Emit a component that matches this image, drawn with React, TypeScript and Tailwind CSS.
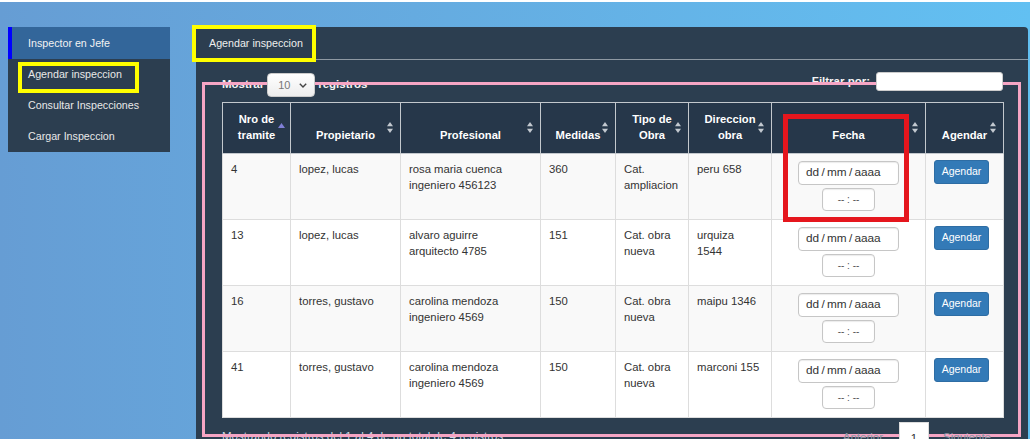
import React from "react";

type Row = {
  n: string;
  prop: string;
  prof: string[];
  med: string;
  tipo: string[];
  dir: string[];
};

const rows: Row[] = [
  { n: "4", prop: "lopez, lucas", prof: ["rosa maria cuenca", "ingeniero 456123"], med: "360", tipo: ["Cat.", "ampliacion"], dir: ["peru 658"] },
  { n: "13", prop: "lopez, lucas", prof: ["alvaro aguirre", "arquitecto 4785"], med: "151", tipo: ["Cat. obra", "nueva"], dir: ["urquiza", "1544"] },
  { n: "16", prop: "torres, gustavo", prof: ["carolina mendoza", "ingeniero 4569"], med: "150", tipo: ["Cat. obra", "nueva"], dir: ["maipu 1346"] },
  { n: "41", prop: "torres, gustavo", prof: ["carolina mendoza", "ingeniero 4569"], med: "150", tipo: ["Cat. obra", "nueva"], dir: ["marconi 155"] },
];

const SortBoth = () => (
  <svg width="6" height="11" viewBox="0 0 6 11" className="absolute right-[7px] top-[19px]">
    <path d="M3 0 L6 4.2 H0 Z" fill="#c3c9d0" />
    <path d="M3 11 L6 6.8 H0 Z" fill="#c3c9d0" />
  </svg>
);

const SortAsc = () => (
  <svg width="7" height="5" viewBox="0 0 7 5" className="absolute right-[5px] top-[20px]">
    <path d="M3.5 0 L7 5 H0 Z" fill="#7f7fd6" />
  </svg>
);

const headers: { lines: string[]; asc?: boolean }[] = [
  { lines: ["Nro de", "tramite"], asc: true },
  { lines: ["Propietario"] },
  { lines: ["Profesional"] },
  { lines: ["Medidas"] },
  { lines: ["Tipo de", "Obra"] },
  { lines: ["Direccion", "obra"] },
  { lines: ["Fecha"] },
  { lines: ["Agendar"] },
];

const widths = [68, 110, 140, 75, 73, 83, 154, 78];

function Lines({ lines }: { lines: string[] }) {
  return (
    <>
      {lines.map((l) => (
        <div key={l}>{l}</div>
      ))}
    </>
  );
}

export default function App() {
  return (
    <div className="relative w-[1030px] h-[439px] overflow-hidden border-t-2 border-white bg-gradient-to-r from-[#669dd4] to-[#62c0f2] font-['Liberation_Sans',Arial,sans-serif]">
      <div className="flex items-start pl-[8px] pt-[25px]">
        {/* Sidebar */}
        <aside className="w-[162px] bg-[#2c3e50]">
          <div className="h-[32px] flex items-center bg-[#33669a] border-l-4 border-[#0000ff] pl-[16px] text-[10.7px] text-[#f2f2f2]">
            Inspector en Jefe
          </div>
          {["Agendar inspeccion", "Consultar Inspecciones", "Cargar Inspeccion"].map((t) => (
            <div key={t} className="h-[31px] flex items-center pl-[20px] text-[10.7px] text-[#e8e8e8]">
              {t}
            </div>
          ))}
        </aside>

        {/* Main panel */}
        <main className="ml-[26px] w-[832px] h-[412px] bg-[#2c3e50] rounded-tr-[4px]">
          <div className="flex h-[33px] border-b border-[#8f99a3]">
            <div className="w-[117px] h-[33px] -mb-px bg-[#2c3e50] flex items-center pl-[13px] text-[10.7px] text-[#eeeeee]">
              Agendar inspeccion
            </div>
          </div>

          <div className="pl-[26px] pr-[25px] pt-[13px]">
            <div className="flex justify-between items-start h-[24px]">
              <div className="flex items-center h-[24px] text-[11.5px] font-bold text-[#f4f4f4]">
                <span>Mostrar</span>
                <div className="relative z-20 ml-[3px] mr-[4px] w-[48px] h-[24px] rounded-[4px] bg-gradient-to-b from-white to-[#ededed] border border-[#cccccc] flex items-center justify-between pl-[10px] pr-[7px] text-[11px] font-normal text-[#777]">
                  <span>10</span>
                  <svg width="8" height="5" viewBox="0 0 8 5">
                    <path d="M0.8 0.8 L4 4 L7.2 0.8" stroke="#444" strokeWidth="1.4" fill="none" />
                  </svg>
                </div>
                <span className="ml-[-1px]">registros</span>
              </div>
              <div className="flex items-center h-[19px] mt-[-1px] text-[11.5px] font-bold text-[#f4f4f4]">
                <span>Filtrar por:</span>
                <div className="relative z-20 ml-[6px] w-[127px] h-[19px] rounded-[3px] bg-white border border-[#cccccc]" />
              </div>
            </div>

            <table className="mt-[5px] w-[781px] table-fixed border-collapse">
              <colgroup>
                {widths.map((w, i) => (
                  <col key={i} style={{ width: w }} />
                ))}
              </colgroup>
              <thead>
                <tr className="h-[51px]">
                  {headers.map((h, i) => (
                    <th
                      key={i}
                      className="relative align-bottom bg-[#26374a] border border-[#c3c8cd] px-[6px] pb-[10px] pt-[8px] text-center text-[11.2px] leading-[16px] font-bold text-white"
                    >
                      <Lines lines={h.lines} />
                      {h.asc ? <SortAsc /> : <SortBoth />}
                    </th>
                  ))}
                </tr>
              </thead>
              <tbody>
                {rows.map((r, idx) => (
                  <tr key={r.n} className={idx % 2 === 0 ? "h-[66px] bg-[#f9f9f9]" : "h-[66px] bg-white"}>
                    <td className="align-top border border-[#dddddd] px-[8px] pt-[7px] text-[11.3px] leading-[16px] text-[#333]">{r.n}</td>
                    <td className="align-top border border-[#dddddd] px-[8px] pt-[7px] text-[11.3px] leading-[16px] text-[#333]">{r.prop}</td>
                    <td className="align-top border border-[#dddddd] px-[8px] pt-[7px] text-[11.3px] leading-[16px] text-[#333]">
                      <Lines lines={r.prof} />
                    </td>
                    <td className="align-top border border-[#dddddd] px-[8px] pt-[7px] text-[11.3px] leading-[16px] text-[#333]">{r.med}</td>
                    <td className="align-top border border-[#dddddd] px-[8px] pt-[7px] text-[11.3px] leading-[16px] text-[#333]">
                      <Lines lines={r.tipo} />
                    </td>
                    <td className="align-top border border-[#dddddd] px-[8px] pt-[7px] text-[11.3px] leading-[16px] text-[#333]">
                      <Lines lines={r.dir} />
                    </td>
                    <td className="align-top border border-[#dddddd] px-[8px] pt-[7px]">
                      <div className="mx-auto w-[101px] h-[24px] rounded-[4px] border border-[#c6c6c6] bg-white shadow-[inset_0_1px_1px_rgba(0,0,0,0.08)] flex items-center pl-[7px] text-[11.8px] [word-spacing:-1px] text-[#333]">
                        dd / mm / aaaa
                      </div>
                      <div className="mx-auto mt-[3px] w-[53px] h-[23px] rounded-[4px] border border-[#c6c6c6] bg-white shadow-[inset_0_1px_1px_rgba(0,0,0,0.08)] flex items-center justify-center text-[10px] text-[#555]">
                        -- : --
                      </div>
                    </td>
                    <td className="align-top border border-[#dddddd] px-[8px] pt-[6px]">
                      <div className="w-[55px] h-[24px] rounded-[3px] bg-[#337ab7] border border-[#2e6da4] flex items-center justify-center text-[10.5px] text-white">
                        Agendar
                      </div>
                    </td>
                  </tr>
                ))}
              </tbody>
            </table>

            <div className="flex justify-between items-start">
              <div className="mt-[10px] text-[11.5px] text-[#cfd8e2]">
                Mostrando registros del 1 al 4 de un total de 4 registros
              </div>
              <div className="relative z-20 mt-[4px] flex items-start text-[11.5px]">
                <div className="pl-[12px] pr-[14px] pt-[7px] text-[#8a96a3]">Anterior</div>
                <div className="ml-[2px] w-[30px] h-[28px] bg-white border border-[#dddddd] flex justify-center pt-[7px] text-[#333]">1</div>
                <div className="pl-[14px] pr-[12px] pt-[7px] text-[#8a96a3]">Siguiente</div>
              </div>
            </div>
          </div>
        </main>
      </div>

      {/* Annotation overlays */}
      <div className="absolute z-10 left-[18px] top-[60px] w-[121px] h-[31px] border-4 border-[#ffff00]" />
      <div className="absolute z-10 left-[192px] top-[23px] w-[124px] h-[37px] border-4 border-[#ffff00]" />
      <div className="absolute z-10 left-[202px] top-[80px] w-[819px] h-[355px] border-[3px] border-[#f6a5c4]" />
      <div className="absolute z-10 left-[783px] top-[112px] w-[126px] h-[108px] border-[5px] border-[#e5161d]" />
    </div>
  );
}
